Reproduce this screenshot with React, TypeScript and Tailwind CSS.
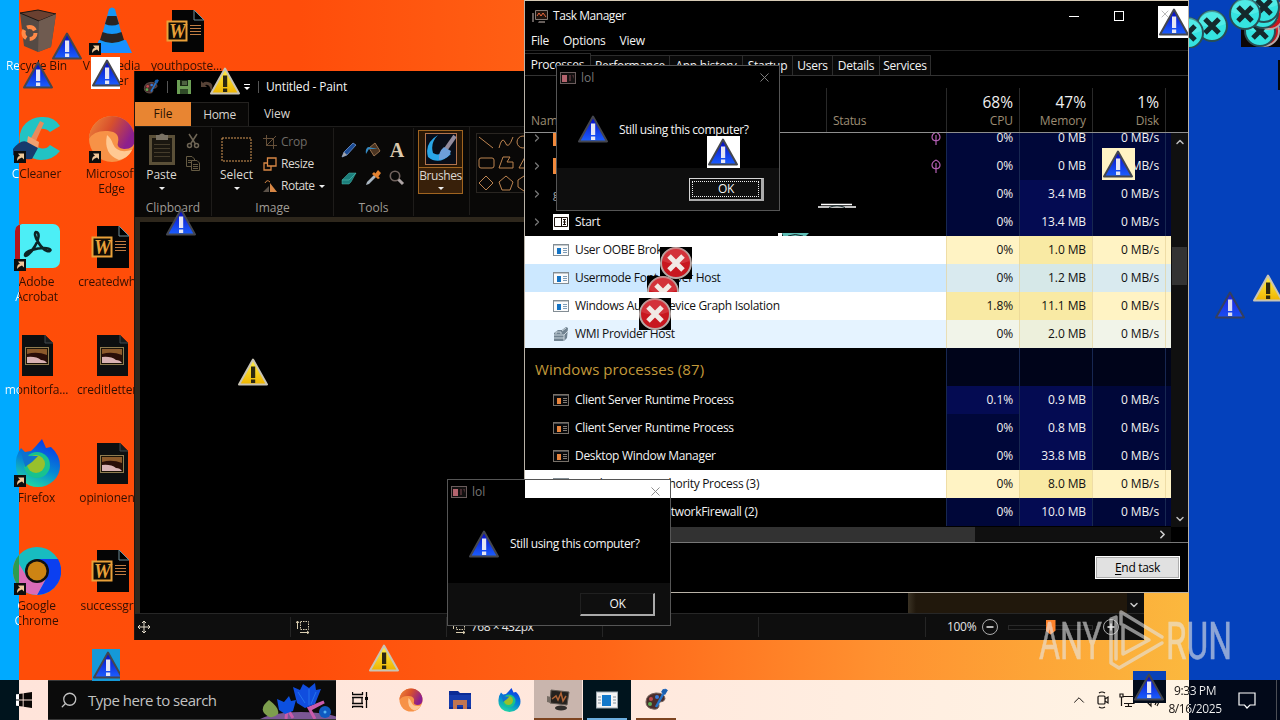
import type { ReactNode } from "react";
import { ChevronDown, ChevronRight, ChevronUp, Search, X } from "lucide-react";

const FONT = "font-['Segoe_UI','Open_Sans','Noto_Sans',sans-serif]";

/* ---------- shared icons ---------- */

interface TriangleProps {
  tone?: "blue" | "yellow" | "dim";
  className?: string;
}

const TONES = {
  blue: { top: "#0506c0", bottom: "#1c60ff", edge: "#44464e", mark: "#e6e6f4" },
  yellow: { top: "#fff04a", bottom: "#eeb400", edge: "#c9c4b4", mark: "#2b2710" },
  dim: { top: "#1b1be0", bottom: "#1a50f0", edge: "#34405f", mark: "#dcdcf4" },
};

function Triangle({ tone = "blue", className = "" }: TriangleProps) {
  const c = TONES[tone];
  return (
    <svg viewBox="0 0 32 30" className={`block w-8 h-[30px] ${className}`}>
      <defs>
        <linearGradient id={`tri-${tone}`} x1="0" y1="0" x2="0" y2="1">
          <stop offset="0" stopColor={c.top} />
          <stop offset="1" stopColor={c.bottom} />
        </linearGradient>
      </defs>
      <path
        d="M16 2.500 L30 27.500 H2 Z"
        fill={`url(#tri-${tone})`}
        stroke={c.edge}
        strokeWidth="2"
        strokeLinejoin="round"
      />
      <path d="M14 9.500 h4.200 v11.500 h-4.200 Z M14 22.500 h4.200 v3.500 h-4.200 Z" fill={c.mark} />
    </svg>
  );
}

function Cross({ tone = "red" }: { tone?: "red" | "teal" }) {
  const red = tone === "red";
  return (
    <svg viewBox="0 0 34 34" className="block w-[34px] h-[34px]">
      <circle cx="17" cy="17" r="15" fill={red ? "#c8171f" : "#35e3e0"} stroke={red ? "#b9a9a6" : "#284f55"} strokeWidth="2" />
      <path d="M3.500 15 A13.500 13.500 0 0 1 30.500 15 Q17 21 3.500 15" fill={red ? "#e0555a" : "#6ff3ee"} opacity=".45" />
      <path d="M10 10 L24 24 M24 10 L10 24" stroke={red ? "#f1e9e4" : "#14292c"} strokeWidth="5" />
    </svg>
  );
}

function ShortcutArrow() {
  return (
    <svg viewBox="0 0 12 12" className="absolute left-[1px] bottom-0 w-3 h-3">
      <rect width="12" height="12" fill="#0d0d0d" />
      <path d="M3 10 Q3 5 6 5 L4 2.500 H10 V8.500 L8 6.500 Q5 7 3 10" fill="#f0c89a" />
    </svg>
  );
}

function WordFile() {
  return (
    <svg viewBox="0 0 48 48" className="w-12 h-12">
      <path d="M9 3 H31 L41 13 V45 H9 Z" fill="#050505" />
      <path d="M31 3 V13 H41 Z" fill="#000" stroke="#6f8d98" strokeWidth="1" />
      <rect x="4.500" y="14.500" width="19" height="19" fill="#100c05" stroke="#e9a13a" strokeWidth="2" />
      <text
        x="6"
        y="30.500"
        textLength="17"
        lengthAdjust="spacingAndGlyphs"
        fontSize="20"
        fontStyle="italic"
        fontWeight="700"
        fill="#e9a13a"
        fontFamily="Liberation Serif, serif"
      >
        W
      </text>
      <path d="M27 18.500 H38 M27 21.500 H38 M27 24.500 H38 M27 27.500 H38" stroke="#c07d43" />
    </svg>
  );
}

function ImageFile() {
  return (
    <svg viewBox="0 0 48 48" className="w-12 h-12">
      <path d="M9 4 H32 L40 12 V45 H9 Z" fill="#0d0f10" />
      <path d="M32 4 V12 H40" fill="#181c1e" stroke="#41494c" />
      <rect x="12.500" y="16.500" width="23" height="17" fill="#1b1307" stroke="#8f7c50" />
      <path d="M14 18 H34 V25 Q26 22 14 27 Z" fill="#8c5a2b" />
      <path d="M14 23 Q24 20 34 24 V32 H14 Z" fill="#2a0e08" />
      <path d="M14 26 Q23 25 28 29 Q32 29 34 32 H14 Z" fill="#d9b3b4" />
    </svg>
  );
}

function RecycleBin() {
  return (
    <svg viewBox="0 0 48 48" className="w-12 h-12">
      <path d="M7 6 L25 3 L43 7 L38 40 L25 45 L11 39 Z" fill="#554a44" />
      <path d="M7 6 L25 3 L43 7 L26 14 Z" fill="#6b4030" stroke="#1b1512" />
      <path d="M26 14 L43 7 L38 40 L25 45 Z" fill="#6f5b50" />
      <circle cx="16.500" cy="26" r="6" fill="none" stroke="#ff8a48" strokeWidth="4" strokeDasharray="9 3.500" />
    </svg>
  );
}

function Vlc() {
  return (
    <svg viewBox="0 0 48 48" className="w-12 h-12">
      <path d="M11 33 H38 L44 46 H5 Z" fill="#1b8fff" />
      <path d="M21 2 Q24 -1 27 2 L36 36 Q24 42 12 36 Z" fill="#1596f7" />
      <path d="M19.500 9 H28.500 L31 17 Q24 20 17 17 Z M14.500 25 Q24 29 33.500 25 L36 33 Q24 39 12 33 Z" fill="#2a2422" />
    </svg>
  );
}

function CCleaner() {
  return (
    <svg viewBox="0 0 48 48" className="w-12 h-12">
      <path d="M47 11 Q41 1 28 2 A21 21 0 0 0 28 45 Q40 45 47 36 L37 30 Q33 35 27 33 A10 10 0 0 1 27 14 Q33 13 37 17 Z" fill="#22c3c4" />
      <path d="M27 6 L31 8 L22 28 L17 25 Z" fill="#e78b5d" />
      <path d="M15 21 L26 27 L25 34 L14 28 Z" fill="#f0a070" />
      <path d="M0 34 Q8 24 14 27 L25 33 L19 44 Q8 45 0 40 Z" fill="#173a6d" />
    </svg>
  );
}

function EdgeSwirl({ className = "w-12 h-12" }: { className?: string }) {
  return (
    <svg viewBox="0 0 48 48" className={className}>
      <defs>
        <linearGradient id="edge" x1="0" x2="1" y1="0" y2=".4">
          <stop offset="0" stopColor="#f08a3c" />
          <stop offset=".5" stopColor="#d8502c" />
          <stop offset="1" stopColor="#8c1f8e" />
        </linearGradient>
      </defs>
      <circle cx="24" cy="24" r="23" fill="#f79247" />
      <path d="M1 24 A23 23 0 0 1 47 24 Q47 34 36 34 Q28 33 30 27 Q32 17 20 16 Q6 15 1 24" fill="url(#edge)" />
      <path d="M19 20 Q15 39 31 45 Q40 43 44 35 Q29 39 25 29 Q23 23 19 20" fill="#ffc993" />
    </svg>
  );
}

function Acrobat() {
  return (
    <svg viewBox="0 0 48 48" className="w-12 h-12">
      <rect x="2" y="1" width="45" height="44" rx="7" fill="#4ceef6" />
      <path d="M7 1 H9 Q2 2 2 8 V38 Q2 43 7 45 V1" fill="#b5151c" />
      <path
        d="M23 9 C27 9 26 17 22 23 C18 30 12 35 12 32 C12 28 24 25 31 25 C39 25 39 29 34 28 C28 26 19 11 23 9 Z"
        fill="none"
        stroke="#0c2426"
        strokeWidth="2.600"
      />
    </svg>
  );
}

function FirefoxIcon({ className = "w-12 h-12" }: { className?: string }) {
  return (
    <svg viewBox="0 0 48 48" className={className}>
      <defs>
        <linearGradient id="ff" x1=".7" y1="0" x2=".3" y2="1">
          <stop offset="0" stopColor="#0b35e8" />
          <stop offset=".55" stopColor="#0587d4" />
          <stop offset="1" stopColor="#22dca0" />
        </linearGradient>
      </defs>
      <path d="M8 9 L12 13 L18 12 L23 7 L29 0 L33 9 L38 8 Q47 16 47 27 A22 21 0 0 1 3 27 Q2 17 8 9 Z" fill="url(#ff)" />
      <circle cx="24" cy="26" r="13" fill="#17c28f" />
      <circle cx="23" cy="25" r="9" fill="#98c02c" />
      <path d="M8 12 L16 17 L25 17 L19 23 L12 28 Z" fill="#0f72cf" />
    </svg>
  );
}

function ChromeIcon() {
  return (
    <svg viewBox="0 0 48 48" className="w-12 h-12">
      <circle cx="24" cy="24" r="24" fill="#18bcc0" />
      <path d="M24 12 H45 A24 24 0 0 1 24 48 L34 30 Z" fill="#0b3ff0" />
      <path d="M3 12 L14 30 L34 30 L24 48 A24 24 0 0 1 3 12" fill="#db6bb8" />
      <path d="M6 8 V40 A24 24 0 0 1 6 8" fill="#2d9c50" />
      <circle cx="24" cy="24" r="12" fill="#101010" />
      <circle cx="24" cy="24" r="9.500" fill="#cd8413" />
    </svg>
  );
}

/* ---------- desktop ---------- */

interface Shortcut {
  label: string[];
  icon: ReactNode;
  arrow?: boolean;
}

const SHORTCUTS: Shortcut[] = [
  { label: ["Recycle Bin"], icon: <RecycleBin /> },
  { label: ["CCleaner"], icon: <CCleaner />, arrow: true },
  { label: ["Adobe", "Acrobat"], icon: <Acrobat />, arrow: true },
  { label: ["monitorfa..."], icon: <ImageFile /> },
  { label: ["Firefox"], icon: <FirefoxIcon />, arrow: true },
  { label: ["Google", "Chrome"], icon: <ChromeIcon />, arrow: true },
  { label: ["VLC media", "player"], icon: <Vlc />, arrow: true },
  { label: ["Microsoft", "Edge"], icon: <EdgeSwirl />, arrow: true },
  { label: ["createdwh..."], icon: <WordFile /> },
  { label: ["creditletter..."], icon: <ImageFile /> },
  { label: ["opinionen..."], icon: <ImageFile /> },
  { label: ["successgr..."], icon: <WordFile /> },
  { label: ["youthposte..."], icon: <WordFile /> },
];

function DesktopIcons() {
  return (
    <div className="grid grid-flow-col grid-rows-[repeat(6,108px)] auto-cols-[75px] w-[225px]">
      {SHORTCUTS.map(({ label, icon, arrow }, i) => (
        <div key={label[0]} className="flex flex-col items-center pt-[7px] pr-[2px]">
          <div className="relative w-12 h-12">
            {icon}
            {arrow && <ShortcutArrow />}
          </div>
          <div
            className={`w-[74px] pt-[3px] flex flex-col items-center text-xs leading-[15px] tracking-[-0.15px] whitespace-nowrap bg-clip-text text-transparent ${
              i < 6 ? "bg-[linear-gradient(90deg,#fff_19px,#330f02_19px)]" : "bg-[#330f02]"
            }`}
          >
            {label.map((line) => (
              <span key={line}>{line}</span>
            ))}
          </div>
        </div>
      ))}
    </div>
  );
}

/* ---------- paint ---------- */

function RibbonGroup({ name, className, children }: { name: string; className: string; children: ReactNode }) {
  return (
    <div className={`flex flex-col shrink-0 border-r border-[#1e1c1a] h-[88px] mt-px ${className}`}>
      <div className="flex h-[73px]">{children}</div>
      <span className="text-center text-xs leading-[14px] text-[#a09c96]">{name}</span>
    </div>
  );
}

function Caret() {
  return <i className="block w-0 h-0 border-x-[3px] border-x-transparent border-t-[3px] border-t-[#eee]" />;
}

function PaintLogo({ className = "w-4 h-4" }: { className?: string }) {
  return (
    <svg viewBox="0 0 24 24" className={className}>
      <path d="M2 14 Q2 6 12 5 Q21 5 21 11 Q20 14 16 14 Q14 15 15 18 Q14 22 9 21 Q2 20 2 14" fill="#4a2d2b" stroke="#75625c" />
      <circle cx="7" cy="11" r="2" fill="#c14b4c" />
      <circle cx="13" cy="9" r="2" fill="#3779d6" />
      <circle cx="6" cy="16" r="2" fill="#5dac54" />
      <path d="M22 1 L12 19" stroke="#2674ca" strokeWidth="2.500" />
      <path d="M19 1 L24 2 L21 7 L17 4 Z" fill="#1c5fae" />
    </svg>
  );
}

function PaintRibbon() {
  return (
    <div className="flex h-[91px] bg-[#090807] text-[#dcd8d2] text-xs border-t border-[#1e1d1c]">
      <RibbonGroup name="Clipboard" className="w-[77px]">
        <div className="flex flex-col items-center w-[53px] pt-[5px]">
          <svg viewBox="0 0 26 32" className="w-[26px] h-8">
            <rect x="1.500" y="3.500" width="23" height="27" fill="#1b1710" stroke="#5b5038" strokeWidth="3" />
            <path d="M5 11.500 H21 M5 15.500 H21 M5 19.500 H21 M5 23.500 H21" stroke="#453c2b" />
            <path d="M7 2 H10 Q13 -1 16 2 H19 V7 H7 Z" fill="#7a7264" />
          </svg>
          <span className="leading-4 mt-[2px] mb-[4px]">Paste</span>
          <Caret />
        </div>
        <div className="flex flex-col items-center gap-[6px] pt-[5px] -ml-[3px]">
          <svg viewBox="0 0 16 16" className="w-4 h-4" fill="none" stroke="#6e6555" strokeWidth="1.500">
            <path d="M4 1 L10.500 11 M12 1 L5.500 11" />
            <circle cx="4.500" cy="12.500" r="2" />
            <circle cx="11.500" cy="12.500" r="2" />
          </svg>
          <svg viewBox="0 0 16 16" className="w-4 h-4" fill="#0b0a08" stroke="#655a42">
            <path d="M1.500 1.500 H7 L9.500 4 V11.500 H1.500 Z M3 5.500 H8 M3 7.500 H8" />
            <path d="M6.500 5.500 H12 L14.500 8 V15.500 H6.500 Z M8 9.500 H13 M8 11.500 H13 M8 13.500 H13" />
          </svg>
        </div>
      </RibbonGroup>

      <RibbonGroup name="Image" className="w-[122px]">
        <div className="flex flex-col items-center w-12 pt-[9px] pl-px">
          <svg viewBox="0 0 32 25" className="w-8 h-[25px]">
            <rect x="1" y="1" width="29" height="23" fill="none" stroke="#d99a58" strokeDasharray="2 1" />
          </svg>
          <span className="leading-4 mt-[5px] mb-[4px]">Select</span>
          <Caret />
        </div>
        <div className="flex flex-col gap-[6px] pt-[6px] pl-[3px]">
          <div className="flex items-center gap-[4px] h-4 text-[#6f6b66] tracking-[-0.2px]">
            <svg viewBox="0 0 14 14" className="w-[14px]" fill="none" stroke="#665039">
              <path d="M3.500 0 V10.500 H14 M0 3.500 H10.500 V14 M3 11 L13 1" />
            </svg>
            Crop
          </div>
          <div className="flex items-center gap-[4px] h-4 tracking-[-0.4px]">
            <svg viewBox="0 0 14 14" className="w-[14px]" fill="none" stroke="#d88745" strokeWidth="1.300">
              <path d="M4.500 1 H13 V9 H4.500 Z M4 6 H1 V13 H8 V9" />
            </svg>
            Resize
          </div>
          <div className="flex items-center gap-[4px] h-4 tracking-[-0.5px]">
            <svg viewBox="0 0 14 14" className="w-[14px]">
              <path d="M0 13 L6 7 V13 Z" fill="#5b5148" />
              <path d="M7 13 V4 L14 13 Z" fill="#d88745" />
              <path d="M2 4 Q4 0 7 3" stroke="#d88745" fill="none" />
            </svg>
            Rotate
            <Caret />
          </div>
        </div>
      </RibbonGroup>

      <RibbonGroup name="Tools" className="w-[80px]">
        <div className="grid grid-cols-[24px_24px_24px] grid-rows-[28px_28px] pt-[8px] pl-[3px] place-items-center">
          <svg viewBox="0 0 16 16" className="w-4 h-4">
            <path d="M1 15 L3 10 L12 1 L15 3 L6 13 Z" fill="#1b4b94" stroke="#7ba2dc" strokeWidth=".7" />
            <path d="M1 15 L3 10 L6 13 Z" fill="#a5a5aa" />
          </svg>
          <svg viewBox="0 0 16 16" className="w-4 h-4">
            <path d="M4 6 L10 1 L15 9 L9 14 Z" fill="#4b3421" stroke="#96714e" />
            <path d="M3 5 Q0 7 1 12 L4 7 L13 7" fill="#3489c2" />
          </svg>
          <span className="font-['Liberation_Serif',serif] font-bold text-[20px] leading-5 text-[#dcc9ad]">A</span>
          <svg viewBox="0 0 16 16" className="w-4 h-4">
            <path d="M1 10 L8 3 H15 L10 12 L8 14 H1 Z" fill="#1c7f7c" stroke="#48b8ae" strokeWidth=".5" />
            <path d="M1 10 H8 L15 3" stroke="#48b8ae" fill="none" strokeWidth=".7" />
          </svg>
          <svg viewBox="0 0 16 16" className="w-4 h-4">
            <path d="M1 15 L2 12 L9 5 L11 7 L4 14 Z" fill="#aab6c1" />
            <path d="M7 4 L9 2 L15 8 L13 9 Z M10 4 L13 0 L16 3 L13 7 Z" fill="#e38230" />
          </svg>
          <svg viewBox="0 0 16 16" className="w-4 h-4" fill="none">
            <circle cx="6" cy="6" r="4.700" stroke="#70625d" strokeWidth="1.600" />
            <path d="M9.500 9.500 L14 14" stroke="#ada4a4" strokeWidth="3" />
          </svg>
        </div>
      </RibbonGroup>

      <div className="flex shrink-0 w-[56px] h-[88px] border-r border-[#1e1c1a] pl-[4px] pt-[3px]">
        <div className="flex flex-col items-center w-[45px] h-16 border border-[#a06420] bg-[#38200a]">
          <div className="flex items-center justify-center w-full h-[37px] bg-[#281706] border-b border-[#a06420]">
            <svg viewBox="0 0 32 32" className="w-8 h-8">
              <rect x=".5" y=".5" width="31" height="31" fill="#090d18" stroke="#b2734d" />
              <path d="M13 2 Q-1 10 3 24 Q14 33 26 21 L19 17 Q14 24 8 20 Q5 10 13 2" fill="#29a6e8" />
              <path d="M30 3 L21 16" stroke="#928b9d" strokeWidth="4" />
              <path d="M19 14 Q13 19 14 27 Q24 26 26 18 Z" fill="#6d9fda" />
            </svg>
          </div>
          <span className="leading-4 tracking-[-0.45px] mb-[3px]">Brushes</span>
          <Caret />
        </div>
      </div>

      <div className="pl-[6px] pt-[6px]">
        <svg viewBox="0 0 120 60" className="w-[120px] h-[60px]" fill="none" stroke="#bd8450">
          <rect x=".5" y=".5" width="119" height="59" stroke="#292521" />
          <path d="M3 4 L17 15 M23 15 Q26 3 29 9 Q32 18 37 4" />
          <circle cx="47" cy="9" r="6" />
          <rect x="3" y="25" width="15" height="10" rx="2" />
          <path d="M23 35 L27 24 H34 L31 29 L37 29 V35 Z M43 35 L49 24 L55 35 Z" />
          <path d="M10 43 L17 50 L10 57 L3 50 Z M30 43 L37 49 L34 57 H26 L23 49 Z M48 43 L55 47 V54 L48 58 L42 54 V47 Z" />
        </svg>
      </div>
    </div>
  );
}

function SelectionGlyph() {
  return (
    <svg viewBox="0 0 14 14" className="w-[14px] h-[14px]" fill="none" stroke="#d9cdb0">
      <rect x="4.500" y="1.500" width="8" height="8" strokeDasharray="1.500 1" />
      <path d="M1.500 1 V9 M0 3 L1.500 1 L3 3 M4 12.500 H13 M11 11 L13 12.500 L11 14" />
    </svg>
  );
}

function PaintWindow() {
  return (
    <section className="absolute left-[134px] top-[71px] w-[1010px] h-[569px] flex flex-col bg-black border-l border-[#241711] overflow-hidden">
      <div className="flex items-center h-[31px] shrink-0 pl-2 text-xs text-[#f4f4f4] tracking-[-0.15px]">
        <PaintLogo />
        <i className="w-px h-3 bg-[#555] mx-[8px]" />
        <svg viewBox="0 0 16 16" className="w-4 h-4">
          <path d="M1 1 H15 V15 H1 Z" fill="#6c9f55" />
          <path d="M4 1 H12 V7 H4 Z" fill="#182713" />
          <path d="M4 10 H12 V15 H4 Z" fill="#304a28" />
          <path d="M6 3 H11 M6 5 H11" stroke="#84a071" />
        </svg>
        <svg viewBox="0 0 16 16" className="w-4 h-4 ml-[7px]">
          <path d="M2 2 V8 H8 L6 6 Q11 4 12 13 Q16 4 9 3 Q6 2 4 4 Z" fill="#564236" />
        </svg>
        <svg viewBox="0 0 8 8" className="w-2 h-2 ml-[28px]">
          <path d="M1 1.500 H7" stroke="#fff" />
          <path d="M1 4 H7 L4 7 Z" fill="#fff" />
        </svg>
        <i className="w-px h-3 bg-[#555] mx-[7px]" />
        Untitled - Paint
      </div>
      <div className="flex h-6 shrink-0 text-xs text-[#d7d3ce]">
        <span className="w-14 h-6 flex items-center justify-center bg-[#e88532] text-[#2b1301]">File</span>
        <span className="w-[58px] h-[25px] flex items-center justify-center bg-[#090807] border-t border-r border-[#242220] tracking-[-0.3px]">Home</span>
        <span className="w-[54px] h-6 flex items-center justify-center pl-[2px]">View</span>
      </div>
      <PaintRibbon />
      <div className="flex flex-1 border-t-[5px] border-l-[5px] border-[#2e271c]">
        <div className="w-[768px]" />
        <div className="w-[219px] bg-[linear-gradient(90deg,#3a3224,#21180c_8px)]" />
        <div className="flex-1 flex items-end justify-center bg-[#0e0e0e] text-[#c4c4c4] pb-[2px] pr-[3px]">
          <ChevronDown size={12} strokeWidth={3} />
        </div>
      </div>
      <div className="flex items-center h-[27px] shrink-0 bg-[#0e0e0e] border-t border-[#272727] text-xs text-[#e4e4e4]">
        <div className="w-[156px] h-5 border-r border-[#252525] pl-[3px] flex items-center">
          <svg viewBox="0 0 12 12" className="w-3 h-3" fill="none" stroke="#e4dccb">
            <path d="M6 0 V12 M0 6 H12 M4 2 L6 0 L8 2 M4 10 L6 12 L8 10 M2 4 L0 6 L2 8 M10 4 L12 6 L10 8" />
          </svg>
        </div>
        <div className="w-[156px] h-5 border-r border-[#252525] pl-[5px] flex items-center">
          <SelectionGlyph />
        </div>
        <div className="w-[156px] h-5 border-r border-[#252525] pl-[5px] flex items-center gap-[5px] tracking-[-0.5px]">
          <SelectionGlyph />
          768 × 432px
        </div>
        <div className="w-[156px] h-5 border-r border-[#252525]" />
        <div className="w-[167px] h-5 border-r border-[#252525]" />
        <div className="flex items-center pl-[21px]">
          <span className="w-[35px] tracking-[-0.3px]">100%</span>
          <svg viewBox="0 0 16 16" className="w-4 h-4" fill="none" stroke="#aaa">
            <circle cx="8" cy="8" r="7.500" />
            <path d="M4.500 8 H11.500" stroke="#eee" strokeWidth="1.500" />
          </svg>
          <div className="flex items-center justify-center w-[85px] h-[5px] border border-[#292929] mx-[10px]">
            <i className="w-[10px] h-[15px] bg-[#ff832c] [clip-path:polygon(0_0,100%_0,100%_75%,50%_100%,0_75%)]" />
          </div>
          <svg viewBox="0 0 16 16" className="w-4 h-4" fill="none" stroke="#aaa">
            <circle cx="8" cy="8" r="7.500" />
            <path d="M4.500 8 H11.500 M8 4.500 V11.500" stroke="#eee" strokeWidth="1.500" />
          </svg>
        </div>
      </div>
    </section>
  );
}

/* ---------- task manager ---------- */

type IconKind = "app" | "appDark" | "orange" | "start" | "wmi" | "none";

interface Row {
  name: string;
  icon: IconKind;
  expand?: boolean;
  leaf?: boolean;
  cpu: string;
  mem: string;
  tone: string;
  cpuBg: string;
  memBg: string;
  diskBg: string;
}

const DARK = { tone: "bg-black text-[#f2f2f2]", cpuBg: "bg-[#000739]", memBg: "bg-[#040b52]", diskBg: "bg-[#000739]" };
const IDLE = { ...DARK, memBg: "bg-[#000739]" };
const LIGHT = { tone: "bg-white text-[#111]", cpuBg: "bg-[#fff3c4]", memBg: "bg-[#f9eaa4]", diskBg: "bg-[#fff3c4]" };
const BUSY = { ...LIGHT, cpuBg: "bg-[#f9eaa4]" };
const SELECTED = { tone: "bg-[#cce8ff] text-[#111]", cpuBg: "bg-[#d9eaef]", memBg: "bg-[#d6e8e8]", diskBg: "bg-[#d9eaef]" };
const HOVER = { tone: "bg-[#e5f3ff] text-[#111]", cpuBg: "bg-[#f1f4e9]", memBg: "bg-[#edf0dc]", diskBg: "bg-[#f1f4e9]" };

const ROWS: Row[] = [
  { name: "", icon: "orange", expand: true, leaf: true, cpu: "0%", mem: "0 MB", ...IDLE },
  { name: "", icon: "orange", expand: true, leaf: true, cpu: "0%", mem: "0 MB", ...IDLE },
  { name: "", icon: "none", expand: true, cpu: "0%", mem: "3.4 MB", ...DARK },
  { name: "Start", icon: "start", expand: true, cpu: "0%", mem: "13.4 MB", ...DARK },
  { name: "User OOBE Broker", icon: "app", cpu: "0%", mem: "1.0 MB", ...LIGHT },
  { name: "Usermode Font Driver Host", icon: "app", cpu: "0%", mem: "1.2 MB", ...SELECTED },
  { name: "Windows Audio Device Graph Isolation", icon: "app", cpu: "1.8%", mem: "11.1 MB", ...BUSY },
  { name: "WMI Provider Host", icon: "wmi", cpu: "0%", mem: "2.0 MB", ...HOVER },
];

const SYSTEM_ROWS: Row[] = [
  { name: "Client Server Runtime Process", icon: "appDark", cpu: "0.1%", mem: "0.9 MB", ...DARK, cpuBg: "bg-[#040b52]" },
  { name: "Client Server Runtime Process", icon: "appDark", cpu: "0%", mem: "0.8 MB", ...DARK },
  { name: "Desktop Window Manager", icon: "appDark", cpu: "0%", mem: "33.8 MB", ...DARK },
  { name: "Local Security Authority Process (3)", icon: "app", cpu: "0%", mem: "8.0 MB", ...LIGHT },
  { name: "LocalServiceNoNetworkFirewall (2)", icon: "appDark", cpu: "0%", mem: "10.0 MB", ...DARK },
];

function ProcessIcon({ kind }: { kind: IconKind }) {
  if (kind === "none") return <i className="w-4 text-[11px] not-italic text-[#aaa]">g</i>;
  if (kind === "orange") return <i className="w-4 h-4 bg-[#f28a3c]" />;
  if (kind === "start")
    return (
      <svg viewBox="0 0 16 16" className="w-4 h-4">
        <rect width="16" height="16" fill="#fff" />
        <path d="M1.500 3.500 H14.500 V12.500 H1.500 Z" fill="#fff" stroke="#1b110b" />
        <path d="M8.500 3.500 V12.500 M10 5.500 H13 M10 8 H13 M10 10.500 H13 M11.500 5 V11" stroke="#1b110b" fill="none" />
      </svg>
    );
  if (kind === "wmi")
    return (
      <svg viewBox="0 0 16 16" className="w-4 h-4">
        <path d="M1 7 L5 4 H9 L13 1 L15 2 L14 12 L11 15 H1 Z" fill="#718391" />
        <path d="M1 9 H11 V15 M11 9 L15 5 M3 8 V6 H8 V8 M9 5 L13 2 M1 12 H11" stroke="#cbd6de" fill="none" />
      </svg>
    );
  const dark = kind === "appDark";
  return (
    <svg viewBox="0 0 16 14" className="w-4 h-[14px]">
      <rect x=".5" y="1.500" width="15" height="11" fill={dark ? "#08090b" : "#fbfbfb"} stroke={dark ? "#777068" : "#838d94"} />
      <path d="M1 2.500 H15" stroke={dark ? "#4c4d4f" : "#c5c9cb"} />
      <rect x="4" y="5" width="4" height="6" fill={dark ? "#e8843c" : "#1373c4"} />
      <path d="M10 5.500 H14 M10 7.500 H14 M10 9.500 H14" stroke={dark ? "#847c74" : "#7d9cb8"} />
    </svg>
  );
}

function ProcessRow({ row }: { row: Row }) {
  const light = !row.tone.startsWith("bg-black");
  const cell = `w-[73px] h-full shrink-0 flex items-center justify-end pr-[6px] border-l whitespace-nowrap tracking-[-0.1px] ${
    light ? "border-[#e5cf92]/60" : "border-[#172751]"
  }`;
  return (
    <div className={`flex items-center h-7 shrink-0 text-xs ${row.tone}`}>
      <div className="flex items-center w-[421px] h-full pl-[6px]">
        <span className="w-[22px] text-[#777]">{row.expand && <ChevronRight size={12} strokeWidth={2.5} />}</span>
        <ProcessIcon kind={row.icon} />
        <span className="ml-[6px] tracking-[-0.31px] whitespace-nowrap">{row.name}</span>
        {row.leaf && (
          <svg viewBox="0 0 10 14" className="w-[10px] h-[14px] ml-auto mr-[5px]" fill="none" stroke="#b45fb4" strokeWidth="1.200">
            <path d="M5 1 Q1 3 1 6 Q1 9.500 5 10 Q9 9.500 9 6 Q9 3 5 1 M5 4 V14" />
          </svg>
        )}
      </div>
      <div className={`${cell} ${row.cpuBg}`}>{row.cpu}</div>
      <div className={`${cell} ${row.memBg}`}>{row.mem}</div>
      <div className={`${cell} ${row.diskBg}`}>0 MB/s</div>
      <div className={`flex-1 h-full border-l ${light ? "border-[#e5cf92]/60" : "border-[#172751]"} ${row.diskBg}`} />
    </div>
  );
}

function HeaderCell({ value, label }: { value: string; label: string }) {
  return (
    <div className="w-[73px] h-[44px] flex flex-col items-end justify-end pr-[6px] pb-[2px] border-l border-[#292929]">
      <span className="text-[15.5px] leading-5 text-[#efefef]">{value}</span>
      <span className="text-xs leading-[18px] tracking-[-0.1px] text-[#9c8c73]">{label}</span>
    </div>
  );
}

const TABS = [
  ["Performance", "w-[79px]"],
  ["App history", "w-[73px]"],
  ["Startup", "w-[50px]"],
  ["Users", "w-10"],
  ["Details", "w-[47px]"],
  ["Services", "w-[51px]"],
];

function TaskManager() {
  return (
    <section className="absolute left-[524px] top-0 w-[665px] h-[593px] flex flex-col bg-black border border-[#b9b2a7] border-t-[#d6cab5] overflow-hidden text-[#f4f4f4]">
      <div className="flex items-center h-[30px] shrink-0 pl-[7px] text-xs">
        <svg viewBox="0 0 16 16" className="w-4 h-4 mr-[5px]">
          <path d="M3.500 2.500 H15.500 V11.500 H3.500 Z" fill="#20130d" stroke="#847a74" />
          <path d="M5 8 L7 5 L9 8 L11 5 L14 9" stroke="#eb683d" fill="none" />
          <path d="M0 5 H2 V14 H0 Z M7 13 H13 V15 H6 Z" fill="#665e5b" />
        </svg>
        <span className="tracking-[-0.45px]">Task Manager</span>
        <div className="flex items-center gap-[35px] ml-auto mr-[64px]">
          <i className="w-[10px] h-px bg-white" />
          <i className="w-[10px] h-[10px] border border-white" />
        </div>
      </div>
      <div className="flex items-center gap-[14px] h-5 shrink-0 pl-[6px] border-b border-[#222] text-xs tracking-[-0.25px]">
        <span>File</span>
        <span>Options</span>
        <span>View</span>
      </div>
      <div className="flex items-end h-[25px] shrink-0 border-b border-[#333] text-xs tracking-[-0.25px]">
        <span className="flex items-center justify-center w-[66px] h-[22px] border-t border-r border-[#2d2d2d]">Processes</span>
        {TABS.map(([name, width]) => (
          <span key={name} className={`flex items-center justify-center h-[20px] border-t border-r border-[#2d2d2d] bg-[#090909] ${width}`}>
            {name}
          </span>
        ))}
      </div>
      <div className="flex items-end h-[57px] shrink-0 border-b border-[#8e8e8e]">
        <div className="w-[302px] h-11 flex items-end pl-[6px] pb-[2px] border-r border-[#292929] text-xs leading-[18px] text-[#9c8c73]">Name</div>
        <div className="w-[119px] h-11 flex items-end pl-[6px] pb-[2px] text-xs leading-[18px] tracking-[-0.3px] text-[#9c8c73]">Status</div>
        <HeaderCell value="68%" label="CPU" />
        <HeaderCell value="47%" label="Memory" />
        <HeaderCell value="1%" label="Disk" />
        <i className="h-11 border-l border-[#292929]" />
      </div>
      <div className="flex h-[394px] shrink-0">
        <div className="flex flex-col w-[646px] overflow-hidden">
          <div className="flex flex-col -mt-[9px]">
            {ROWS.map((row, i) => (
              <ProcessRow key={i} row={row} />
            ))}
            <div className="flex items-center h-[38px] shrink-0">
              <span className="w-[421px] pl-[10px] pt-[5px] text-[15px] text-[#c39a3b] tracking-[0.08px]">Windows processes (87)</span>
              <i className="w-[73px] h-full bg-[#00041a] border-l border-[#172751]" />
              <i className="w-[73px] h-full bg-[#00041a] border-l border-[#172751]" />
              <i className="w-[73px] h-full bg-[#00041a] border-l border-[#172751]" />
              <i className="flex-1 h-full bg-[#00041a] border-l border-[#172751]" />
            </div>
            {SYSTEM_ROWS.map((row, i) => (
              <ProcessRow key={i} row={row} />
            ))}
          </div>
        </div>
        <div className="flex flex-col items-center justify-between flex-1 bg-[#101010] text-[#bdbdbd] pt-[3px] pb-[2px]">
          <ChevronUp size={12} strokeWidth={3} />
          <i className="w-[15px] h-[38px] bg-[#333] -mt-[129px]" />
          <ChevronDown size={12} strokeWidth={3} />
        </div>
      </div>
      <div className="flex items-center h-4 shrink-0 border-b border-[#777]">
        <i className="w-[450px] h-[15px] bg-[#323232]" />
        <div className="flex items-center justify-end w-[196px] h-[15px] bg-[#101010] pr-[2px] text-[#cfcfcf]">
          <ChevronRight size={13} strokeWidth={3} />
        </div>
      </div>
      <div className="flex items-center justify-end flex-1 pr-2">
        <span className="flex items-center justify-center w-[85px] h-[23px] bg-[#e1e1e1] border border-white outline-1 -outline-offset-2 outline-[#adadad] text-xs tracking-[-0.3px] text-black">
          <u className="underline-offset-2">E</u>nd task
        </span>
      </div>
    </section>
  );
}

/* ---------- message boxes ---------- */

function MessageBox({ className, focused, ghost }: { className: string; focused?: boolean; ghost?: boolean }) {
  return (
    <section className={`absolute w-[224px] flex flex-col bg-black border border-[#555] text-xs ${className}`}>
      {/* leftover of the row underneath, painted through the title bar */}
      {ghost && <i className="absolute left-[77px] top-0 w-[145px] h-[18px] bg-white" />}
      <div className="relative flex items-center h-[23px] shrink-0 pl-[3px] pr-[7px] text-[#777]">
        <svg viewBox="0 0 16 14" className="w-4 h-[14px] mr-[5px]">
          <rect x=".5" y="1.500" width="15" height="11" fill="#121010" stroke="#6a5c5c" />
          <rect x="2" y="4" width="5" height="7" fill="#b4646e" />
          <path d="M9 4 H11 V10 H9 Z M12 4 H14 V8" fill="#482c30" />
        </svg>
        lol
        <X size={15} strokeWidth={1.5} className="ml-auto text-[#858585]" />
      </div>
      <div className="flex items-center flex-1 pl-5 pt-[2px] text-[#f4f4f4]">
        <Triangle className="-mt-px" />
        <span className="ml-[10px] tracking-[-0.38px] whitespace-nowrap">Still using this computer?</span>
      </div>
      <div className="flex items-center justify-end h-[42px] shrink-0 bg-[#0e0e0e] pr-[15px]">
        <span
          className={`flex w-[75px] h-[23px] p-[2px] bg-[#0f0f0f] text-[#f4f4f4] ${
            focused ? "border border-[#d6d6d6] border-r-[3px] border-b-2 border-r-[#aaa] border-b-[#aaa]" : "border border-[#202020] border-r-2 border-b-2 border-r-[#aaa] border-b-[#aaa]"
          }`}
        >
          <b className={`flex flex-1 items-center justify-center font-normal tracking-[-0.3px] pl-px ${focused ? "border border-dotted border-[#eee]" : ""}`}>OK</b>
        </span>
      </div>
    </section>
  );
}

/* ---------- cursor trails ---------- */

interface Sprite {
  x: number;
  y: number;
  tone?: "blue" | "yellow" | "dim";
  patch?: string;
  width?: number;
}

const TRAIL: Sprite[] = [
  { x: 51, y: 30 },
  { x: 22, y: 59 },
  { x: 91, y: 57, patch: "bg-white", width: 29 },
  { x: 165, y: 206 },
  { x: 707, y: 136, patch: "bg-white", width: 33 },
  { x: 1158, y: 6, patch: "bg-white", width: 30 },
  { x: 1102, y: 148, patch: "bg-[#fff3c4]", width: 33 },
  { x: 1214, y: 289, tone: "dim" },
  { x: 92, y: 649, patch: "bg-[#1599d8]", width: 28 },
  { x: 1133, y: 671, patch: "bg-[linear-gradient(#0a42b7_9px,#020b1a_9px)]", width: 33 },
  { x: 209, y: 65, tone: "yellow" },
  { x: 237, y: 356, tone: "yellow" },
  { x: 368, y: 642, tone: "yellow" },
  { x: 1252, y: 272, tone: "yellow" },
];

function Trails() {
  return (
    <>
      {TRAIL.map(({ x, y, tone, patch = "", width = 32 }) => (
        <div key={`${x}-${y}`} className={`absolute h-8 overflow-hidden pt-px ${patch}`} style={{ left: x, top: y, width }}>
          <Triangle tone={tone} className="max-w-none" />
        </div>
      ))}
      <X size={12} strokeWidth={1} className="absolute left-[1159px] top-[8px] text-[#777]" />

      <div className="absolute left-[660px] top-[247px] w-8 h-8 bg-black" />
      <div className="absolute left-[647px] top-[276px] w-8 h-4 bg-black" />
      <div className="absolute left-[646px] top-[275px] w-[34px] h-[17px] overflow-hidden"><Cross /></div>
      <div className="absolute left-[659px] top-[246px]"><Cross /></div>
      <div className="absolute left-[639px] top-[298px] w-8 h-8 bg-black" />
      <div className="absolute left-[638px] top-[297px]"><Cross /></div>

      <svg viewBox="0 0 40 5" className="absolute left-[817px] top-[203px] w-10 h-[5px]">
        <path d="M4 1.500 H35 M1 4 H39" stroke="#fff" strokeWidth="1.500" />
        <path d="M12 4.500 Q20 1 28 4.500" stroke="#14292c" fill="none" />
      </svg>
      <svg viewBox="0 0 33 3" className="absolute left-[778px] top-[233px] w-[33px] h-[3px]">
        <path d="M0 0 H4 V3 H0 Z" fill="#fff" />
        <path d="M4 0 H31 L28 3 H5 Z" fill="#5dbdb5" />
        <path d="M10 3 Q17 0 25 3" stroke="#14292c" fill="none" />
      </svg>

      <div className="absolute left-[1189px] top-0 w-[91px] h-12 overflow-hidden">
        <div className="absolute left-[52px] top-[28px] w-[39px] h-[19px] bg-[#0c0606]" />
        <div className="absolute left-[58px] top-[14px]"><Cross /></div>
        <div className="absolute left-[54px] top-[14px]"><Cross tone="teal" /></div>
        <div className="absolute left-[63px] top-[-3px]"><Cross /></div>
        <div className="absolute left-[57px] top-[-4px]"><Cross tone="teal" /></div>
        <div className="absolute left-[58px] top-[-10px]"><Cross tone="teal" /></div>
        <div className="absolute left-[39px] top-[-3px]"><Cross tone="teal" /></div>
        <div className="absolute left-[6px] top-[9px]"><Cross tone="teal" /></div>
        <div className="absolute left-[-18px] top-[16px]"><Cross tone="teal" /></div>
      </div>
      <div className="absolute left-[1278px] top-[60px] w-[2px] h-[30px] bg-[#07080a]" />
    </>
  );
}

/* ---------- taskbar ---------- */

function TaskButton({ className, line, children }: { className: string; line?: string; children: ReactNode }) {
  return (
    <div className={`flex flex-col h-full items-center justify-end shrink-0 ${className}`}>
      <div className="flex flex-1 items-center">{children}</div>
      {line && <i className={`h-[2px] -mt-[2px] ${line}`} />}
    </div>
  );
}

function Taskbar() {
  return (
    <footer className="flex h-10 bg-[linear-gradient(90deg,#00141d_19px,#ffe4da_19px,#ffe8dd_600px,#fff4e4_1189px,#020919_1189px)]">
      <div className="flex items-center w-12 pl-4">
        <svg viewBox="0 0 16 16" className="w-4 h-4">
          <path d="M0 2.300 L6.700 1.400 V7.600 H0 Z M7.600 1.200 L16 0 V7.600 H7.600 Z M0 8.400 H6.700 V14.600 L0 13.700 Z M7.600 8.400 H16 V16 L7.600 14.800 Z" fill="#0a0605" />
          <path d="M0 2.300 L3 1.900 V7.600 H0 Z M0 8.400 H3 V14.100 L0 13.700 Z" fill="#fff" />
        </svg>
      </div>
      <div className="flex items-center w-72 bg-[#0b0b0b] border-y border-[#383838] pl-3 text-[#c2c2c2]">
        <Search size={18} strokeWidth={1.7} className="-scale-x-100" />
        <span className="ml-[10px] text-[15px] tracking-[-0.5px] whitespace-nowrap">Type here to search</span>
        <svg viewBox="0 0 80 38" className="w-20 h-[38px] ml-auto shrink-0">
          <ellipse cx="45" cy="43" rx="45" ry="12" fill="#7b5795" />
          <path d="M13 19 Q24 27 22 33 Q15 40 8 32 Q4 26 13 19" fill="#7d9e4d" />
          <path d="M37 37 L31 27 L30 38 M59 38 L53 27 L68 21 L53 29" stroke="#c95bab" strokeWidth="3" fill="none" />
          <path d="M21 18 L28 21 L33 15 L35 20 L40 19 L37 30 L29 33 L23 29 Z" fill="#0c50e0" />
          <path d="M37 6 L44 9 L47 3 L53 7 L59 2 L60 9 L65 8 L59 23 L49 27 L41 22 Z" fill="#104dde" />
          <path d="M42 11 L49 22 M53 8 V24 M60 11 L55 23" stroke="#2a7cf0" strokeWidth=".8" />
          <circle cx="69" cy="31" r="6" fill="#105ac0" />
          <circle cx="69" cy="31" r="1.500" fill="#56b5f2" />
        </svg>
      </div>
      <TaskButton className="w-[49px] pr-[2px]">
        <svg viewBox="0 0 16 16" className="w-4 h-4" fill="none" stroke="#080606" strokeWidth="1.300">
          <path d="M.5 0 V3 M10.500 0 V3 M0 2.500 H11 M1 5 V11 M10 5 V11 M0 5.500 H11 M0 11.500 H11 M.5 14 V16 M10.500 14 V16 M0 14.500 H11 M14.500 0 V16" />
          <path d="M13 5 H16 V8 H13 Z" fill="#080606" stroke="none" />
        </svg>
      </TaskButton>
      <TaskButton className="w-[51px]"><EdgeSwirl className="w-6 h-6" /></TaskButton>
      <TaskButton className="w-[48px]">
        <svg viewBox="0 0 24 24" className="w-6 h-6">
          <path d="M1 3 H10 L12 5 H23 V21 H1 Z" fill="#0b2b95" />
          <path d="M1 7 H23 V19 H1 Z" fill="#153bac" />
          <path d="M5 12 H19 V21 H15 V17 H9 V21 H5 Z" fill="#c17651" />
        </svg>
      </TaskButton>
      <TaskButton className="w-[50px]"><FirefoxIcon className="w-6 h-6" /></TaskButton>
      <TaskButton className="w-12 bg-[#c9b5ad]" line="w-12 bg-[#7d4420]">
        <svg viewBox="0 0 24 24" className="w-6 h-6">
          <path d="M5 2 L23 4 L21 17 L4 15 Z" fill="#25211e" stroke="#615a54" />
          <path d="M6 11 L10 8 L12 12 L15 5 L17 13 L20 8" stroke="#b16537" fill="none" strokeWidth="1.500" />
          <path d="M1 8 L5 9 V15 L1 14 Z" fill="#766c64" />
          <ellipse cx="15" cy="20" rx="6" ry="2.500" fill="#312d2b" />
        </svg>
      </TaskButton>
      <TaskButton className="w-12 ml-px bg-[#00141d]" line="w-10 bg-[#6caede]">
        <svg viewBox="0 0 22 18" className="w-[22px] h-[18px]">
          <rect x=".5" y="1" width="21" height="16" fill="#f4f4f4" stroke="#9eaab1" />
          <rect x="6" y="4" width="9" height="11" fill="#1279ca" />
          <path d="M2 6 H5 M2 9 H5 M2 12 H5 M17 6 H20 M17 9 H20 M17 12 H20" stroke="#83919b" />
        </svg>
      </TaskButton>
      <TaskButton className="w-12 ml-px" line="w-10 bg-[#7d4420]"><PaintLogo className="w-6 h-6" /></TaskButton>

      <div className="flex items-center ml-auto pr-[3px] text-[#17120f]">
        <ChevronUp size={18} strokeWidth={1.3} className="mr-[8px]" />
        <svg viewBox="0 0 14 18" className="w-[14px] h-[18px] mr-[9px]" fill="none" stroke="currentColor" strokeWidth="1.200">
          <rect x="2" y="5" width="7" height="8" rx="1" />
          <path d="M9 8 L12 6 V12 L9 10 M3 2 Q6 0 9 2 M3 16 Q6 18 9 16" />
        </svg>
        <svg viewBox="0 0 16 16" className="w-4 h-4 mr-[9px]" fill="none" stroke="currentColor" strokeWidth="1.200">
          <path d="M4 4.500 H15 V11.500 H5 M9.500 12 V14.500 M6 14.500 H13 M1 2 H4 V5 H1 Z M2.500 5 V14" />
        </svg>
        <svg viewBox="0 0 16 16" className="w-4 h-4 mr-[7px]" fill="none" stroke="currentColor" strokeWidth="1.200">
          <path d="M1 6 H3 L7 2 V14 L3 10 H1 Z M9 5 Q11 8 9 11 M11 3 Q14 8 11 13 M13 2 Q17 8 13 14" />
        </svg>
        <div className="flex flex-col items-center w-[56px] text-xs leading-[18px] tracking-[-0.4px] whitespace-nowrap bg-clip-text text-transparent bg-[linear-gradient(90deg,#17120f_22px,#f2f2f2_22px)]">
          <span>9:33 PM</span>
          <span>8/16/2025</span>
        </div>
        <svg viewBox="0 0 18 18" className="w-[18px] h-[18px] ml-[15px] mr-[20px]" fill="none" stroke="#fff" strokeWidth="1.200">
          <path d="M1 2 H17 V14 H12 L9 17 L6.500 14 H1 Z" />
        </svg>
        <i className="w-px h-10 bg-[#4b4e55]" />
      </div>
    </footer>
  );
}

function Watermark() {
  return (
    <svg viewBox="0 0 194 62" className="absolute left-[1039px] top-[609px] w-[194px] h-[62px] opacity-60">
      <g fill="#e8e8e8" fontFamily="Roboto, sans-serif" fontSize="51" stroke="#e8e8e8" strokeWidth=".5">
        <text x="0" y="50" textLength="63" lengthAdjust="spacingAndGlyphs">ANY</text>
        <text x="127" y="50" textLength="66" lengthAdjust="spacingAndGlyphs">RUN</text>
      </g>
      <g fill="none" stroke="#e4e4e4" strokeWidth="3.500" strokeLinejoin="round" strokeLinecap="round">
        <path d="M82 15 V3 L123 28 M72 10 V54 L80 59 L123 34 M72 10 L77 8 V50" />
        <path d="M84 16 V45 L110 31 Z" />
      </g>
    </svg>
  );
}

export default function App() {
  return (
    <main className={`relative w-[1280px] h-[720px] overflow-hidden flex flex-col ${FONT}`}>
      <div className="flex-1 bg-[linear-gradient(90deg,#00aaff_19px,#ff4d08_19px,#ff4d0a_300px,#ff6517_600px,#ff9130_880px,#fbb83e_1189px,#0441bc_1189px)]">
        <DesktopIcons />
      </div>
      <Taskbar />
      <PaintWindow />
      <TaskManager />
      <MessageBox className="left-[556px] top-[65px] h-[146px]" focused />
      <MessageBox className="left-[447px] top-[479px] h-[147px]" ghost />
      <Watermark />
      <Trails />
    </main>
  );
}
